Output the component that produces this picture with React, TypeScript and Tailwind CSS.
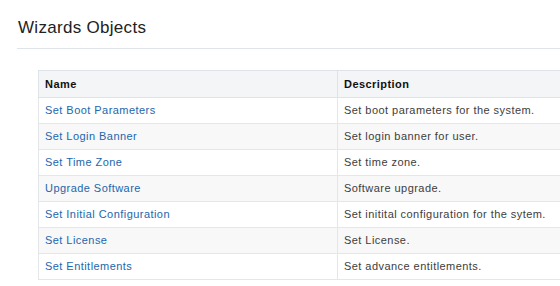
const rows = [
  { name: 'Set Boot Parameters', desc: 'Set boot parameters for the system.' },
  { name: 'Set Login Banner', desc: 'Set login banner for user.' },
  { name: 'Set Time Zone', desc: 'Set time zone.' },
  { name: 'Upgrade Software', desc: 'Software upgrade.' },
  { name: 'Set Initial Configuration', desc: 'Set initital configuration for the sytem.' },
  { name: 'Set License', desc: 'Set License.' },
  { name: 'Set Entitlements', desc: 'Set advance entitlements.' },
];

export default function App() {
  return (
    <div
      className="h-[286px] w-[560px] overflow-hidden bg-white"
      style={{ fontFamily: '"Liberation Sans", Arial, sans-serif' }}
    >
      <div className="ml-[17px] border-b border-[#dfe4e8] pb-[10px] pt-[18px]">
        <h1 className="pl-px text-[17px] leading-[20px] tracking-[0.3px] text-[#222]">Wizards Objects</h1>
      </div>

      <div className="pl-[38px] pt-[21px]">
        <table className="w-[560px] border-collapse text-[11px] tracking-[0.45px]">
          <thead>
            <tr className="h-[27px] bg-[#f3f5f7]">
              <th className="w-[299px] border border-[#dde3e8] px-[6px] text-left font-bold text-[#111]">Name</th>
              <th className="border border-[#dde3e8] px-[6px] text-left font-bold text-[#111]">Description</th>
            </tr>
          </thead>
          <tbody>
            {rows.map((r, i) => (
              <tr key={r.name} className={`h-[26px] ${i % 2 === 1 ? 'bg-[#f8f8f8]' : 'bg-white'}`}>
                <td className="border border-[#e4e7ea] px-[6px] text-[#2266ad]">{r.name}</td>
                <td className="border border-[#e4e7ea] px-[6px] text-[#3d3d3d]">{r.desc}</td>
              </tr>
            ))}
          </tbody>
        </table>
      </div>
    </div>
  );
}
